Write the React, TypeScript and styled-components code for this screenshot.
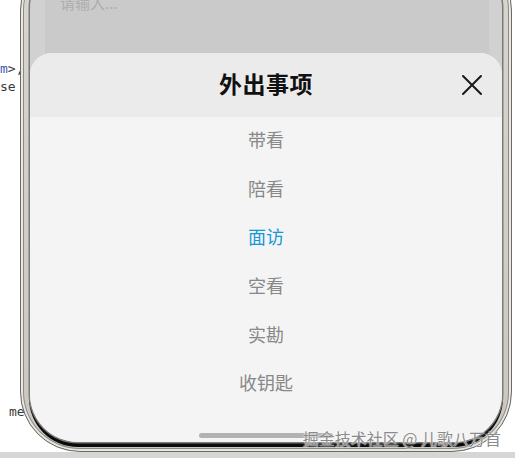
import React from 'react';
import styled, { createGlobalStyle } from 'styled-components';

const GlobalStyle = createGlobalStyle`
  html, body {
    margin: 0;
    padding: 0;
    background: #ffffff;
    overflow: hidden;
  }
`;

const options = ['带看', '陪看', '面访', '空看', '实勘', '收钥匙'];
const activeOption = '面访';

const Stage = styled.div`
  position: relative;
  width: 515px;
  height: 458px;
  overflow: hidden;
  background: #ffffff;
  font-family: "Noto Sans CJK SC", "Noto Sans", sans-serif;
`;

const CodeBackdrop = styled.div`
  display: flex;
  flex-direction: column;
  height: 100%;
  font-family: "DejaVu Sans Mono", "Liberation Mono", monospace;
  font-size: 13px;
  line-height: 18px;
  color: #3a3a3a;
`;

const CodeLine = styled.div<{ $top: number; $indent?: number }>`
  margin-top: ${(p) => p.$top}px;
  padding-left: ${(p) => p.$indent || 0}px;
  white-space: pre;
`;

const Tag = styled.span`
  color: #3b5cb8;
`;

const BottomBand = styled.div`
  margin-top: auto;
  height: 6px;
  background: #d6d6d6;
`;

const Phone = styled.div`
  position: absolute;
  left: 20px;
  top: -50px;
  width: 492px;
  height: 502px;
  box-sizing: border-box;
  padding: 9px;
  border: 1.5px solid #6a6a6a;
  border-radius: 60px;
  background: linear-gradient(180deg, #d9d6cf 0%, #cbc7bf 100%);
  box-shadow: inset 0 0 0 2px #e9e7e2, inset 0 0 0 3px #8d8a84;
`;

const Screen = styled.div`
  position: relative;
  height: 100%;
  border-radius: 48px;
  overflow: hidden;
  background: #d1d1d1;
  box-shadow: 0 0 0 1.5px #7c7c7c, 0 4px 0 1px #0b0b0b;
`;

const DimmedPage = styled.div`
  display: flex;
  height: 100%;
  padding: 0 13px 0 15px;
`;

const InputBox = styled.div`
  flex: 1;
  height: 95px;
  background: #cacaca;
  padding: 32px 0 0 15px;
  box-sizing: border-box;
  font-size: 15px;
  color: #adadad;
`;

const Sheet = styled.div`
  position: absolute;
  left: 0;
  right: 0;
  top: 93px;
  bottom: 0;
  display: flex;
  flex-direction: column;
  background: #f4f4f4;
  border-radius: 22px 22px 0 0;
  overflow: hidden;
`;

const SheetHeader = styled.div`
  position: relative;
  height: 64px;
  flex-shrink: 0;
  display: flex;
  align-items: center;
  justify-content: center;
  background: #ebebeb;
`;

const Title = styled.div`
  padding-bottom: 5px;
  font-size: 23px;
  font-weight: 700;
  color: #111111;
  letter-spacing: 0.5px;
`;

const CloseButton = styled.button`
  position: absolute;
  right: 18px;
  top: 50%;
  transform: translateY(-50%);
  width: 24px;
  height: 24px;
  padding: 0;
  border: none;
  background: transparent;
  display: flex;
  align-items: center;
  justify-content: center;
`;

const OptionList = styled.div`
  display: flex;
  flex-direction: column;
`;

const Option = styled.div<{ $active: boolean }>`
  height: 48.6px;
  box-sizing: border-box;
  padding-bottom: 4px;
  display: flex;
  align-items: center;
  justify-content: center;
  font-size: 18px;
  color: ${(p) => (p.$active ? '#1598d4' : '#888888')};
`;

const HomeIndicator = styled.div`
  position: absolute;
  left: 50%;
  bottom: 4px;
  width: 134px;
  height: 5px;
  margin-left: -67px;
  border-radius: 3px;
  background: #b2b2b2;
`;

const Watermark = styled.div`
  position: absolute;
  right: 14px;
  bottom: 10px;
  font-size: 16px;
  line-height: 20px;
  color: #8a8a8a;
  text-shadow: 0 0 1px #ffffff, 0 0 2px #ffffff;
  white-space: nowrap;
`;

export default function App() {
  return (
    <Stage>
      <GlobalStyle />
      <CodeBackdrop>
        <CodeLine $top={60}>
          <Tag>m</Tag>&gt;,
        </CodeLine>
        <CodeLine $top={0}>se</CodeLine>
        <CodeLine $top={307} $indent={9}>me</CodeLine>
        <BottomBand />
      </CodeBackdrop>
      <Phone>
        <Screen>
          <DimmedPage>
            <InputBox>请输入...</InputBox>
          </DimmedPage>
          <Sheet>
            <SheetHeader>
              <Title>外出事项</Title>
              <CloseButton aria-label="关闭">
                <svg width="22" height="22" viewBox="0 0 22 22">
                  <path d="M2 2 L20 20 M20 2 L2 20" stroke="#1a1a1a" strokeWidth="2" strokeLinecap="round" />
                </svg>
              </CloseButton>
            </SheetHeader>
            <OptionList>
              {options.map((o) => (
                <Option key={o} $active={o === activeOption}>
                  {o}
                </Option>
              ))}
            </OptionList>
          </Sheet>
          <HomeIndicator />
        </Screen>
      </Phone>
      <Watermark>掘金技术社区 @ 儿歌八万首</Watermark>
    </Stage>
  );
}
